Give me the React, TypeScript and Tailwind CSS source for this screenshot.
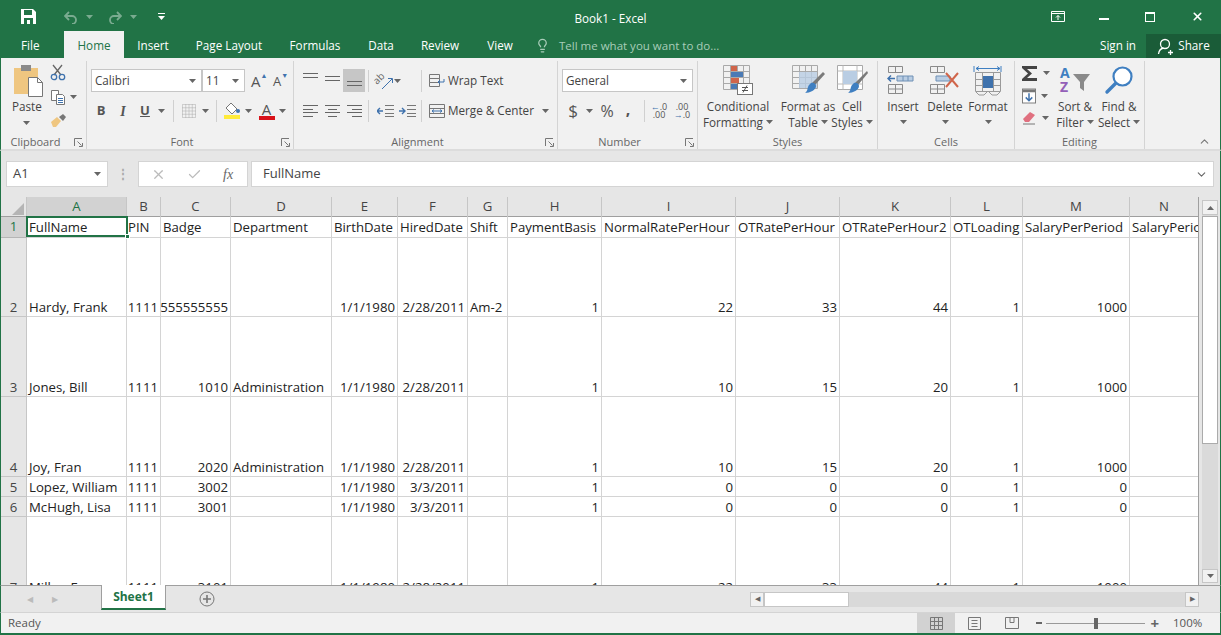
import type { ReactNode } from 'react'
import { ChevronDown, ChevronUp, Lightbulb, X, Check } from 'lucide-react'

const letters = 'ABCDEFGHIJKLMN'.split('')
const colTemplate = 'grid grid-cols-[26px_100px_34px_70px_101px_66px_70px_40px_94px_134px_104px_111px_72px_107px_69px]'

const rows: { n: number; h: string; cells: (string | [string])[] }[] = [
  { n: 2, h: 'h-[80px]', cells: ['Hardy, Frank', ['1111'], ['555555555'], '', ['1/1/1980'], ['2/28/2011'], 'Am-2', ['1'], ['22'], ['33'], ['44'], ['1'], ['1000'], ''] },
  { n: 3, h: 'h-[80px]', cells: ['Jones, Bill', ['1111'], ['1010'], 'Administration', ['1/1/1980'], ['2/28/2011'], '', ['1'], ['10'], ['15'], ['20'], ['1'], ['1000'], ''] },
  { n: 4, h: 'h-[80px]', cells: ['Joy, Fran', ['1111'], ['2020'], 'Administration', ['1/1/1980'], ['2/28/2011'], '', ['1'], ['10'], ['15'], ['20'], ['1'], ['1000'], ''] },
  { n: 5, h: 'h-[20px]', cells: ['Lopez, William', ['1111'], ['3002'], '', ['1/1/1980'], ['3/3/2011'], '', ['1'], ['0'], ['0'], ['0'], ['1'], ['0'], ''] },
  { n: 6, h: 'h-[20px]', cells: ['McHugh, Lisa', ['1111'], ['3001'], '', ['1/1/1980'], ['3/3/2011'], '', ['1'], ['0'], ['0'], ['0'], ['1'], ['0'], ''] },
  { n: 7, h: 'h-[80px]', cells: ['Miller, Fran', ['1111'], ['3101'], '', ['1/1/1980'], ['2/28/2011'], '', ['1'], ['22'], ['33'], ['44'], ['1'], ['1000'], ''] },
]

const headerRow = ['FullName', 'PIN', 'Badge', 'Department', 'BirthDate', 'HiredDate', 'Shift', 'PaymentBasis', 'NormalRatePerHour', 'OTRatePerHour', 'OTRatePerHour2', 'OTLoading', 'SalaryPerPeriod', 'SalaryPeriod']

function Caret({ className = 'text-[#666]' }: { className?: string }) {
  return (
    <svg width="7" height="4" viewBox="0 0 7 4" className={className}>
      <path d="M0 0h7L3.5 4z" fill="currentColor" />
    </svg>
  )
}

function Sep({ h = 'h-[22px]' }: { h?: string }) {
  return <div className={`w-px ${h} bg-[#d0d0d0]`} />
}

function Lines({ aligns }: { aligns: [number, number][] }) {
  const step = aligns.length > 2 ? 3.6 : 4
  return (
    <svg width="15" height="12" viewBox="0 0 15 12" className="text-[#666]">
      {aligns.map(([x, w], i) => (
        <rect key={i} x={x} y={Math.round(i * step)} width={w} height="1" fill="currentColor" />
      ))}
    </svg>
  )
}

function GroupLabel({ label, launcher = false }: { label: string; launcher?: boolean }) {
  return (
    <div className={`h-[14px] mt-auto flex items-center justify-center relative text-[11px] leading-[14px] text-[#666] ${launcher ? 'pr-[16px]' : ''}`}>
      {label}
      {launcher && (
        <svg width="9" height="9" viewBox="0 0 9 9" className="absolute right-[3px] top-[3px] text-[#777]">
          <path d="M.5 8V.5H8M5 8.5h3.5V5M3.5 3.5l4 4" fill="none" stroke="currentColor" />
        </svg>
      )}
    </div>
  )
}

function Group({ w, label, launcher, children }: { w: string; label: string; launcher?: boolean; children: ReactNode }) {
  return (
    <div className={`${w} shrink-0 h-[88px] mt-[3px] flex flex-col border-r border-[#d4d4d4]`}>
      <div className="h-[74px] flex">{children}</div>
      <GroupLabel label={label} launcher={launcher} />
    </div>
  )
}

function BigButton({ w, icon, lines, caret, extra = '' }: { w: string; icon: ReactNode; lines: string[]; caret?: 'inline' | 'below'; extra?: string }) {
  return (
    <div className={`${w} ${extra} shrink-0 flex flex-col items-center text-[11.7px] leading-[16px] text-[#444]`}>
      <div className="h-[37px] pt-[4px] flex items-start justify-center">{icon}</div>
      {lines.map((l, i) => (
        <div key={i} className="whitespace-nowrap flex items-center gap-[3px]">
          {l}
          {caret === 'inline' && i === lines.length - 1 && <Caret />}
        </div>
      ))}
      {caret === 'below' && (
        <div className="h-[16px] flex items-center">
          <Caret />
        </div>
      )}
    </div>
  )
}

function ConditionalIcon() {
  return (
    <svg width="32" height="31" viewBox="0 0 32 31">
      <path d="M1.5 .5h26v24h-26zM1.5 6.5h26M1.5 12.5h26M1.5 18.5h26M8.5 .5v24M15.5 .5v24M21.5 .5v24" fill="none" stroke="#a9a9a9" />
      <rect x="9" y="1" width="6" height="5" fill="#d0654a" />
      <rect x="9" y="7" width="12" height="5" fill="#4a7ab5" />
      <rect x="9" y="13" width="8" height="5" fill="#d0654a" />
      <rect x="9" y="19" width="6" height="5" fill="#4a7ab5" />
      <rect x="15.5" y="18.5" width="15" height="11" fill="#fff" stroke="#777" />
      <path d="M20 22.5h6M20 25.5h6M25 20.5l-4 7" stroke="#555" fill="none" />
    </svg>
  )
}

function TableIcon() {
  return (
    <svg width="34" height="31" viewBox="0 0 34 31">
      <path d="M1.5 .5h25v23h-25zM1.5 6.5h25M1.5 12.5h25M1.5 18.5h25M8.5 .5v23M14.5 .5v23M20.5 .5v23" fill="none" stroke="#a9a9a9" />
      <rect x="8" y="7" width="18" height="16" fill="#b9cde3" opacity=".8" />
      <path d="M32 7l2 2-10 11-3-2z" fill="#7a7a7a" />
      <path d="M20 18c3-1 5 1 5 3 0 4-6 7-11 7 3-2 2-5 4-8z" fill="#3f7fc1" />
    </svg>
  )
}

function CellStyleIcon() {
  return (
    <svg width="32" height="31" viewBox="0 0 32 31">
      <path d="M1.5 .5h25v24h-25z" fill="#fff" stroke="#a9a9a9" />
      <path d="M1.5 6h25M7 .5v24M21 .5v24M1.5 19h25" stroke="#bbb" fill="none" />
      <rect x="7" y="6" width="14" height="13" fill="#b9cde3" />
      <path d="M31 6l1 2-10 12-3-2z" fill="#7a7a7a" />
      <path d="M18 18c3-1 5 1 5 3 0 4-6 7-11 7 3-2 2-5 4-8z" fill="#3f7fc1" />
    </svg>
  )
}

function CellsIcon({ kind }: { kind: 'insert' | 'delete' | 'format' }) {
  if (kind === 'format') {
    return (
      <svg width="30" height="31" viewBox="0 0 30 31">
        <path d="M1 1v6M28 1v6M3 3.5h24M3 3.5l3-2M3 3.5l3 2M27 3.5l-3-2M27 3.5l-3 2" fill="none" stroke="#3f7fc1" />
        <path d="M2.5 7.5h25v19h-25zM9.5 7.5v19M20.5 7.5v19M2.5 14.5h25M2.5 20.5h25" fill="none" stroke="#9a9a9a" />
        <rect x="10" y="11" width="10" height="12" fill="#3f72ad" />
        <path d="M3 27l3 3h5l3-3M16 27l3 3h5l3-3" fill="none" stroke="#9a9a9a" />
      </svg>
    )
  }
  return (
    <svg width="32" height="30" viewBox="0 0 32 30">
      <path d="M1.5 1.5h14v6h-14zM8.5 1.5v6M1.5 19.5h14v9h-14zM8.5 19.5v9M1.5 24h14" fill="none" stroke="#8a8a8a" />
      {kind === 'insert' ? (
        <>
          <path d="M10 11h16v5H10z" fill="#b9cde3" stroke="#6f90b5" />
          <path d="M16 11v5M21 11v5" stroke="#6f90b5" />
          <path d="M8 13.5H1M4 10.5l-3 3 3 3" fill="none" stroke="#3f72ad" strokeWidth="1.5" />
        </>
      ) : (
        <>
          <path d="M7 11h14v5H7z" fill="#b9cde3" stroke="#6f90b5" />
          <path d="M17 8l12 14M29 8L17 22" stroke="#d0654a" strokeWidth="2" />
        </>
      )}
    </svg>
  )
}

function SortIcon() {
  return (
    <svg width="32" height="30" viewBox="0 0 32 30">
      <text x="1" y="13" fontSize="14" fontWeight="700" fill="#3f7fc1" fontFamily="Open Sans, sans-serif">A</text>
      <text x="1" y="27" fontSize="14" fontWeight="700" fill="#9460b8" fontFamily="Open Sans, sans-serif">Z</text>
      <path d="M14 9h17l-6 8v9l-4-3v-6z" fill="#8a8a8a" />
    </svg>
  )
}

function FindIcon() {
  return (
    <svg width="30" height="30" viewBox="0 0 30 30">
      <circle cx="18.5" cy="11.5" r="9" fill="#fff" stroke="#3f7fc1" strokeWidth="2.2" />
      <path d="M11.5 18.5L3 27" stroke="#3f7fc1" strokeWidth="3.4" strokeLinecap="round" />
    </svg>
  )
}

function Ribbon() {
  return (
    <div className="h-[93px] shrink-0 bg-[#f1f1f1] border-b-2 border-b-[#dcdcdc] border-x border-x-[#217346] flex text-[#444] overflow-hidden">
      <Group w="w-[86px]" label="Clipboard" launcher>
        <div className="w-[46px] pl-[12px] flex flex-col items-start text-[11.7px] leading-[16px]">
          <svg width="30" height="32" viewBox="0 0 30 32" className="mt-[4px]">
            <rect x="1" y="3" width="24" height="26" fill="#efc680" />
            <rect x="8" y="0" width="10" height="6" fill="#8a8a8a" />
            <path d="M15.5 12.5h9l5 5v14h-14z" fill="#fff" stroke="#777" />
            <path d="M24.5 12.5v5h5" fill="none" stroke="#777" />
          </svg>
          <div className="-ml-[1px] mt-[1px]">Paste</div>
          <div className="ml-[10px] mt-[7px]">
            <Caret />
          </div>
        </div>
        <div className="ml-[3px] flex flex-col gap-[8px] pt-[3px] text-[#666]">
          <svg width="16" height="17" viewBox="0 0 16 17">
            <path d="M3 1l8 10M12 1L4 11" stroke="#666" strokeWidth="1.3" />
            <circle cx="4" cy="13" r="2.7" fill="none" stroke="#3f72ad" strokeWidth="1.3" />
            <circle cx="12" cy="13" r="2.7" fill="none" stroke="#3f72ad" strokeWidth="1.3" />
          </svg>
          <div className="flex items-center gap-[4px]">
            <svg width="16" height="16" viewBox="0 0 16 16">
              <path d="M1.5 1.5h7v10h-7z" fill="#fff" stroke="#777" />
              <path d="M6.5 5.5h6l2 2v8h-8z" fill="#fff" stroke="#777" />
              <path d="M8 9.5h5M8 11.5h5M8 13.5h5" stroke="#3f72ad" />
            </svg>
            <Caret />
          </div>
          <svg width="17" height="14" viewBox="0 0 17 14">
            <path d="M1 9l6-5 4 4-5 6H3z" fill="#efc680" />
            <path d="M9 4l4-3 3 3-3 4z" fill="#777" />
          </svg>
        </div>
      </Group>

      <Group w="w-[207px]" label="Font" launcher>
        <div className="pl-[4px] pt-[8px] flex flex-col">
          <div className="h-[23px] flex items-center">
            <div className="w-[111px] h-[23px] bg-white border border-[#c6c6c6] flex items-center justify-between pl-[3px] pr-[5px] text-[11.7px]">
              Calibri <Caret />
            </div>
            <div className="w-[43px] h-[23px] bg-white border border-[#c6c6c6] flex items-center justify-between pl-[3px] pr-[5px] text-[11.7px]">
              11 <Caret />
            </div>
            <div className="ml-[6px] w-[22px] flex items-start text-[15px] leading-[18px] text-[#555]">
              A<span className="text-[#3f72ad] text-[7px] leading-[8px]">▲</span>
            </div>
            <div className="w-[22px] flex items-start text-[13px] leading-[18px] text-[#555]">
              A<span className="text-[#3f72ad] text-[7px] leading-[8px]">▼</span>
            </div>
          </div>
          <div className="h-[38px] -ml-[1px] flex items-center">
            <span className="w-[22px] text-center text-[13px] font-bold text-[#555]">B</span>
            <span className="w-[22px] text-center text-[14px] italic font-bold text-[#555] font-['Liberation_Serif',serif]">I</span>
            <span className="w-[22px] text-center text-[13px] font-bold underline text-[#555]">U</span>
            <span className="ml-[2px]"><Caret /></span>
            <span className="ml-[8px] mr-[7px]"><Sep /></span>
            <svg width="16" height="16" viewBox="0 0 16 16">
              <path d="M1.5 1.5h13v13h-13zM8 1.5v13M1.5 8h13M4.75 1.5v13M11.25 1.5v13M1.5 4.75h13M1.5 11.25h13" fill="none" stroke="#aaa" strokeDasharray="1 1" />
            </svg>
            <span className="ml-[5px]"><Caret /></span>
            <span className="ml-[7px] mr-[7px]"><Sep /></span>
            <svg width="17" height="18" viewBox="0 0 17 18">
              <path d="M7 1l6 6-5 5-6-6z" fill="#fff" stroke="#777" />
              <circle cx="14" cy="9" r="2" fill="#3f72ad" />
              <rect x="0" y="13" width="16" height="4" fill="#ffeb3b" />
            </svg>
            <span className="ml-[4px]"><Caret /></span>
            <div className="ml-[6px] w-[17px] flex flex-col items-center">
              <span className="text-[15px] leading-[14px] text-[#555]">A</span>
              <span className="w-[16px] h-[4px] bg-[#d8121a]" />
            </div>
            <span className="ml-[4px]"><Caret /></span>
          </div>
        </div>
      </Group>

      <Group w="w-[264px]" label="Alignment" launcher>
        <div className="pl-[5px] pt-[8px] flex flex-col">
          <div className="h-[23px] flex items-center">
            <span className="w-[22px] h-[23px] flex justify-center pt-[4px]"><Lines aligns={[[0, 15], [0, 15]]} /></span>
            <span className="w-[22px] h-[23px] flex justify-center pt-[7px]"><Lines aligns={[[0, 15], [0, 15]]} /></span>
            <span className="w-[22px] h-[23px] bg-[#c6c6c6] flex justify-center pt-[12px]"><Lines aligns={[[0, 15], [0, 15]]} /></span>
            <span className="mx-[3px]"><Sep /></span>
            <svg width="20" height="18" viewBox="0 0 20 18" className="ml-[2px]">
              <text x="0" y="0" fontSize="10" fill="#666" transform="translate(3 13) rotate(-45)" fontFamily="Open Sans, sans-serif">ab</text>
              <path d="M8 17L18 7M14 6.5h4.5v4.5" fill="none" stroke="#3f72ad" />
            </svg>
            <Caret />
            <span className="ml-[20px] mr-[7px]"><Sep /></span>
            <svg width="16" height="14" viewBox="0 0 16 14">
              <path d="M.5 .5h10v4H.5zM.5 4.5h10v4H.5zM.5 8.5h10v4H.5z" fill="none" stroke="#777" />
              <path d="M15 5v3H9M11 6L9 8l2 2" fill="none" stroke="#3f72ad" />
            </svg>
            <span className="ml-[3px] text-[11.7px]">Wrap Text</span>
          </div>
          <div className="h-[38px] flex items-center">
            <span className="w-[22px] flex justify-center"><Lines aligns={[[0, 15], [0, 10], [0, 15], [0, 10]]} /></span>
            <span className="w-[22px] flex justify-center"><Lines aligns={[[0, 15], [3, 9], [0, 15], [3, 9]]} /></span>
            <span className="w-[22px] flex justify-center"><Lines aligns={[[0, 15], [5, 10], [0, 15], [5, 10]]} /></span>
            <span className="mx-[3px]"><Sep /></span>
            <span className="w-[22px] ml-[2px] flex justify-center">
              <svg width="17" height="12" viewBox="0 0 17 12">
                <path d="M8 .5h9M8 4.5h9M8 8.5h9M8 11.5h9" stroke="#777" fill="none" />
                <path d="M6 6H0M3 3L0 6l3 3" stroke="#3f72ad" fill="none" strokeWidth="1.4" />
              </svg>
            </span>
            <span className="w-[22px] flex justify-center">
              <svg width="17" height="12" viewBox="0 0 17 12">
                <path d="M8 .5h9M8 4.5h9M8 8.5h9M8 11.5h9" stroke="#777" fill="none" />
                <path d="M0 6h6M3 3l3 3-3 3" stroke="#3f72ad" fill="none" strokeWidth="1.4" />
              </svg>
            </span>
            <span className="ml-[3px] mr-[7px]"><Sep /></span>
            <svg width="16" height="14" viewBox="0 0 16 14">
              <path d="M.5 .5h15v13H.5zM.5 4.5h15M.5 9.5h15" fill="none" stroke="#777" />
              <path d="M3 7h10M5 5.5L3 7l2 1.5M11 5.5L13 7l-2 1.5" fill="none" stroke="#3f72ad" />
            </svg>
            <span className="ml-[3px] text-[11.7px] whitespace-nowrap">Merge &amp; Center</span>
            <span className="ml-[8px]"><Caret /></span>
          </div>
        </div>
      </Group>

      <Group w="w-[140px]" label="Number" launcher>
        <div className="pl-[4px] pt-[8px] flex flex-col">
          <div className="w-[131px] h-[23px] bg-white border border-[#c6c6c6] flex items-center justify-between pl-[3px] pr-[5px] text-[11.7px]">
            General <Caret />
          </div>
          <div className="h-[38px] flex items-center text-[#555]">
            <span className="w-[22px] text-center text-[17px]">$</span>
            <span className="ml-[2px]"><Caret /></span>
            <span className="w-[24px] ml-[2px] text-center text-[16px]">%</span>
            <span className="w-[18px] text-center text-[16px] font-bold leading-[16px] pb-[5px]">,</span>
            <span className="ml-[7px] mr-[3px]"><Sep /></span>
            <span className="w-[22px] flex flex-col text-[9px] leading-[8px] text-center">
              <span><span className="text-[#3f72ad]">←</span>.0</span>
              <span>.00</span>
            </span>
            <span className="w-[22px] ml-[1px] flex flex-col text-[9px] leading-[8px] text-center">
              <span>.00</span>
              <span><span className="text-[#3f72ad]">→</span>.0</span>
            </span>
          </div>
        </div>
      </Group>

      <Group w="w-[180px]" label="Styles">
        <div className="pl-[5px] flex">
          <BigButton w="w-[70px]" icon={<ConditionalIcon />} lines={['Conditional', 'Formatting']} caret="inline" />
          <BigButton w="w-[60px]" extra="ml-[5px]" icon={<TableIcon />} lines={['Format as', 'Table']} caret="inline" />
          <BigButton w="w-[28px]" icon={<CellStyleIcon />} lines={['Cell', 'Styles']} caret="inline" />
        </div>
      </Group>

      <Group w="w-[137px]" label="Cells">
        <div className="pl-[4px] flex">
          <BigButton w="w-[42px]" icon={<CellsIcon kind="insert" />} lines={['Insert']} caret="below" />
          <BigButton w="w-[42px]" icon={<CellsIcon kind="delete" />} lines={['Delete']} caret="below" />
          <BigButton w="w-[44px]" icon={<CellsIcon kind="format" />} lines={['Format']} caret="below" />
        </div>
      </Group>

      <Group w="w-[130px]" label="Editing">
        <div className="pl-[7px] w-[38px] flex flex-col pt-[4px] shrink-0">
          <div className="h-[16px] flex items-center gap-[5px]">
            <svg width="16" height="15" viewBox="0 0 16 15" className="shrink-0">
              <path d="M0 0h15v3H5l5 4.5L5 12h10v3H0v-2l6-5.5L0 2z" fill="#444" />
            </svg>
            <Caret />
          </div>
          <div className="h-[16px] mt-[7px] flex items-center gap-[5px]">
            <svg width="14" height="16" viewBox="0 0 15 16" className="shrink-0">
              <rect x=".5" y=".5" width="14" height="15" fill="#fff" stroke="#777" />
              <rect x="1" y="1" width="13" height="3" fill="#777" />
              <path d="M7.5 5v8M4 9.5l3.5 3.5L11 9.5" fill="none" stroke="#3f72ad" strokeWidth="1.6" />
            </svg>
            <Caret />
          </div>
          <div className="h-[14px] mt-[7px] flex items-center gap-[5px]">
            <svg width="15" height="14" viewBox="0 0 15 14" className="shrink-0">
              <path d="M1 8l7-7 5 3-6 7H3z" fill="#e0707f" />
              <path d="M1 13h12" stroke="#777" />
            </svg>
            <Caret />
          </div>
        </div>
        <BigButton w="w-[44px]" icon={<SortIcon />} lines={['Sort &', 'Filter']} caret="inline" />
        <BigButton w="w-[44px]" icon={<FindIcon />} lines={['Find &', 'Select']} caret="inline" />
      </Group>

      <div className="flex-1 flex items-end justify-end pr-[9px] pb-[1px]">
        <ChevronUp size={13} className="text-[#777]" />
      </div>
    </div>
  )
}

function Cell({ v }: { v: string | [string] }) {
  const right = Array.isArray(v)
  return (
    <div className={`border-r border-b border-[#d4d4d4] flex items-end overflow-visible whitespace-nowrap px-[2px] leading-[17px] ${right ? 'justify-end' : ''}`}>
      {right ? v[0] : v}
    </div>
  )
}

function Sheet() {
  return (
    <div className="flex-1 min-w-0 relative overflow-hidden bg-white text-[13.2px] text-[#222]">
      <div className={`${colTemplate} h-[20px] bg-[#e6e6e6] text-[#444] border-b border-[#9f9f9f] w-[1198px]`}>
        <div className="border-r border-[#c6c6c6] flex items-end justify-end pr-[2px] pb-[2px]">
          <svg width="12" height="12" viewBox="0 0 12 12"><path d="M12 0v12H0z" fill="#b5b5b5" /></svg>
        </div>
        {letters.map((l, i) => (
          <div key={l} className={`border-r border-[#c6c6c6] flex items-center justify-center ${i === 0 ? 'bg-[#d2d2d2] text-[#217346]' : ''}`}>
            {l}
          </div>
        ))}
      </div>
      <div className="w-[1198px]">
        <div className={`${colTemplate} h-[20px] relative`}>
          <div className="bg-[#d2d2d2] text-[#217346] border-r border-b border-[#b5b5b5] flex items-center justify-center">1</div>
          {headerRow.map((t, i) => (
            <div key={t} className={`border-r border-b border-[#d4d4d4] flex items-center pt-[2px] whitespace-nowrap overflow-hidden ${i === 1 ? 'pl-[1px]' : 'pl-[2px]'}`}>
              {t}
            </div>
          ))}
          {/* selected cell */}
          <div className="absolute left-[25px] top-[-1px] w-[102px] h-[21px] border-2 border-[#217346]">
            <div className="absolute right-[-4px] bottom-[-4px] w-[5px] h-[5px] bg-[#217346] border border-white" />
          </div>
        </div>
        {rows.map((r) => (
          <div key={r.n} className={`${colTemplate} ${r.h}`}>
            <div className="bg-[#e6e6e6] text-[#444] border-r border-b border-[#c6c6c6] flex items-end justify-center leading-[17px]">{r.n}</div>
            {r.cells.map((c, i) => (
              <Cell key={i} v={c} />
            ))}
          </div>
        ))}
      </div>
    </div>
  )
}

export default function App() {
  return (
    <div className="w-[1221px] h-[635px] overflow-hidden flex flex-col bg-[#e6e6e6] font-['Open_Sans',sans-serif] text-[11.7px]">
      <div className="h-[31px] shrink-0 bg-[#217346] flex items-center text-white pl-[21px] pt-[2px] relative">
        <svg width="15" height="15" viewBox="0 0 15 15">
          <path d="M0 0h12l3 3v12H0z" fill="#fff" />
          <rect x="3" y="1" width="8" height="5" fill="#217346" />
          <rect x="3" y="9" width="9" height="6" fill="#217346" />
          <rect x="6" y="11" width="3" height="4" fill="#fff" />
        </svg>
        <svg width="14" height="14" viewBox="0 0 14 14" className="ml-[28px] opacity-40">
          <path d="M5 2L1 6l4 4M1 6h7a4 4 0 010 8" fill="none" stroke="#fff" strokeWidth="1.8" />
        </svg>
        <span className="ml-[8px] opacity-40"><Caret className="text-white" /></span>
        <svg width="14" height="14" viewBox="0 0 14 14" className="ml-[15px] opacity-40">
          <path d="M9 2l4 4-4 4M13 6H6a4 4 0 000 8" fill="none" stroke="#fff" strokeWidth="1.8" />
        </svg>
        <span className="ml-[8px] opacity-40"><Caret className="text-white" /></span>
        <svg width="7" height="7" viewBox="0 0 7 7" className="ml-[21px]">
          <path d="M0 0h7v1H0zM0 3h7L3.5 7z" fill="#fff" />
        </svg>
        <span className="absolute left-0 right-0 top-[10px] leading-[16px] text-center pointer-events-none">Book1 - Excel</span>
        <div className="ml-auto flex items-center z-10">
          <svg width="14" height="11" viewBox="0 0 14 11" className="mr-[34px]">
            <path d="M.5 .5h13v10H.5zM.5 2.5h13M7 9V4.5M5 6.5l2-2 2 2" fill="none" stroke="#fff" />
          </svg>
          <span className="w-[10px] h-[2px] bg-white mr-[36px] mt-[4px]" />
          <span className="w-[10px] h-[10px] border border-t-2 border-white mr-[36px]" />
          <X size={13} strokeWidth={3} className="mr-[17px]" />
        </div>
      </div>

      <div className="h-[27px] shrink-0 bg-[#217346] flex text-white">
        <span className="w-[64px] pl-[21px] pt-[2px] h-[27px] flex items-center">File</span>
        <span className="w-[60px] h-[27px] pt-[2px] bg-[#f1f1f1] text-[#217346] flex items-center justify-center">Home</span>
        <span className="w-[58px] h-[27px] pt-[2px] flex items-center justify-center">Insert</span>
        <span className="w-[94px] h-[27px] pt-[2px] flex items-center justify-center whitespace-nowrap">Page Layout</span>
        <span className="w-[78px] h-[27px] pt-[2px] flex items-center justify-center">Formulas</span>
        <span className="w-[54px] h-[27px] pt-[2px] flex items-center justify-center">Data</span>
        <span className="w-[64px] h-[27px] pt-[2px] flex items-center justify-center">Review</span>
        <span className="w-[56px] h-[27px] pt-[2px] flex items-center justify-center">View</span>
        <span className="ml-[7px] h-[27px] pt-[2px] flex items-center gap-[9px] text-[#a9cdb9] text-[11.5px] whitespace-nowrap">
          <Lightbulb size={15} />
          Tell me what you want to do...
        </span>
        <span className="ml-auto h-[27px] pt-[2px] flex items-center mr-[10px]">Sign in</span>
        <span className="w-[75px] h-[24px] mt-[3px] bg-[#1a5c38] flex items-center justify-center gap-[4px]">
          <svg width="17" height="17" viewBox="0 0 17 17">
            <circle cx="8" cy="6" r="4.5" fill="none" stroke="#fff" strokeWidth="1.3" />
            <path d="M1.5 16c.5-3.5 2.5-5.5 5-6M11 14.5h5M13.5 12v5" fill="none" stroke="#fff" strokeWidth="1.3" />
          </svg>
          Share
        </span>
      </div>

      <Ribbon />

      <div className="h-[46px] shrink-0 pl-[5px] pr-[6px] pt-[10px] flex items-start text-[#444] border-x border-[#217346]">
        <div className="w-[102px] h-[26px] bg-white border border-[#d4d4d4] flex items-center justify-between px-[6px] text-[13px]">
          A1 <Caret />
        </div>
        <div className="w-[30px] h-[26px] flex items-center justify-center text-[#aaa] text-[12px] font-bold">⋮</div>
        <div className="w-[110px] h-[26px] bg-white border border-[#d4d4d4] flex items-center text-[#bbb]">
          <X size={15} className="ml-[12px]" />
          <Check size={15} className="ml-[21px]" />
          <span className="ml-[21px] text-[#666] italic font-['Liberation_Serif',serif] text-[14px]">fx</span>
        </div>
        <div className="ml-[3px] flex-1 h-[26px] bg-white border border-[#d4d4d4] flex items-center justify-between pl-[11px] pr-[5px] text-[13px]">
          FullName <ChevronDown size={13} className="text-[#666]" />
        </div>
      </div>

      <div className="h-[388px] shrink-0 flex border-x border-[#217346]">
        <Sheet />
        <div className="w-[22px] shrink-0 flex flex-col pl-[3px] pr-[2px] pt-[3px] pb-[2px] border-l border-[#9f9f9f]">
          <div className="h-[15px] shrink-0 bg-[#f1f1f1] border border-[#c6c6c6] flex items-center justify-center"><span className="rotate-180"><Caret /></span></div>
          <div className="flex-1 flex flex-col bg-[#dadada]">
            <div className="h-[228px] mt-[1px] bg-white border border-[#ababab]" />
          </div>
          <div className="h-[14px] shrink-0 bg-[#f1f1f1] border border-[#c6c6c6] flex items-center justify-center"><Caret /></div>
        </div>
      </div>

      <div className="h-[27px] shrink-0 flex items-start border-t border-t-[#9f9f9f] border-x border-x-[#217346] bg-[#e6e6e6]">
        <div className="w-[100px] h-[26px] flex items-center pl-[26px] gap-[19px]">
          <span className="text-[#bbb] text-[8px]">◀</span>
          <span className="text-[#bbb] text-[8px]">▶</span>
        </div>
        <div className="w-[65px] h-[25px] -mt-px bg-white border-x border-[#9f9f9f] border-b-[2px] border-b-[#217346] text-[#217346] font-bold text-[12px] flex items-center justify-center">
          Sheet1
        </div>
        <div className="ml-[33px] h-[26px] flex items-center">
          <svg width="16" height="16" viewBox="0 0 16 16">
            <circle cx="8" cy="8" r="7" fill="none" stroke="#777" />
            <path d="M4 8h8M8 4v8" stroke="#777" strokeWidth="1.6" />
          </svg>
        </div>
        <div className="ml-[535px] w-[449px] mt-[6px] h-[15px] flex bg-[#d9d9d9]">
          <div className="w-[14px] bg-[#f1f1f1] border border-[#c6c6c6] flex items-center justify-center text-[7px] text-[#666]">◀</div>
          <div className="w-[85px] bg-white border border-[#c6c6c6]" />
          <div className="flex-1" />
          <div className="w-[14px] bg-[#f1f1f1] border border-[#c6c6c6] flex items-center justify-center text-[7px] text-[#666]">▶</div>
        </div>
      </div>

      <div className="h-[21px] shrink-0 flex items-center bg-[#f1f1f1] border-t border-t-[#d4d4d4] border-x border-x-[#217346] text-[#555] text-[11.5px]">
        <span className="pl-[7px]">Ready</span>
        <div className="ml-auto h-full flex items-center">
          <div className="w-[38px] h-full bg-[#d2d2d2] flex items-center justify-center">
            <svg width="13" height="13" viewBox="0 0 13 13"><path d="M.5 .5h12v12H.5zM.5 4.5h12M.5 8.5h12M4.5 .5v12M8.5 .5v12" fill="none" stroke="#777" /></svg>
          </div>
          <div className="w-[38px] flex justify-center">
            <svg width="13" height="13" viewBox="0 0 13 13"><path d="M.5 .5h12v12H.5zM3.5 3.5h6M3.5 6.5h6M3.5 9.5h6" fill="none" stroke="#777" /></svg>
          </div>
          <div className="w-[38px] flex justify-center">
            <svg width="14" height="12" viewBox="0 0 14 12"><path d="M.5 .5h13v11H.5zM5 .5v5h4v-5" fill="none" stroke="#777" /></svg>
          </div>
          <span className="ml-[5px] w-[6px] h-[2px] bg-[#666]" />
          <div className="ml-[4px] w-[99px] h-px bg-[#999] flex items-center justify-center">
            <span className="w-[4px] h-[11px] bg-[#666]" />
          </div>
          <span className="ml-[5px] text-[15px] font-bold leading-none text-[#666]">+</span>
          <span className="ml-[14px] mr-[20px] w-[27px] text-right">100%</span>
        </div>
      </div>
      <div className="flex-1 bg-[#217346]" />
    </div>
  )
}
